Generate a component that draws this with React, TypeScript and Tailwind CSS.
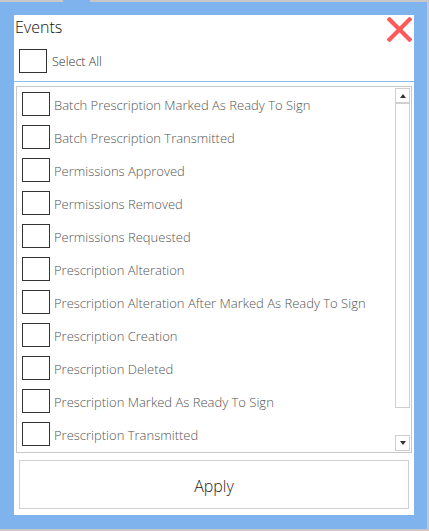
import React from "react";

const items = [
  "Batch Prescription Marked As Ready To Sign",
  "Batch Prescription Transmitted",
  "Permissions Approved",
  "Permissions Removed",
  "Permissions Requested",
  "Prescription Alteration",
  "Prescription Alteration After Marked As Ready To Sign",
  "Prescription Creation",
  "Prescription Deleted",
  "Prescription Marked As Ready To Sign",
  "Prescription Transmitted",
];

function Box() {
  return <div className="w-[28px] h-[24px] border border-[#333] bg-white shrink-0" />;
}

export default function App() {
  return (
    <div
      className="w-[429px] h-[531px] bg-[#c8c8c8] flex flex-col"
      style={{ fontFamily: '"Open Sans", "Liberation Sans", sans-serif' }}
    >
      <div className="h-[2px] flex shrink-0">
        <div className="w-[63px]" />
        <div className="w-[27px] bg-[#7fb3ed]" />
      </div>
      <div className="flex-1 bg-[#7fb3ed] mr-[2px] mb-[2px] pt-[13px] pl-[14px]">
        <div className="w-[400px] h-[500px] bg-white flex flex-col">
          <div className="flex justify-between items-start">
            <div className="mt-[1px] ml-[1px] text-[16px] leading-[22px] font-light text-[#111]">Events</div>
            <svg width="25" height="25" viewBox="0 0 25 25" className="mt-[2px] mr-[2px]">
              <path d="M2.5 2.5 L22.5 22.5 M22.5 2.5 L2.5 22.5" stroke="#ff5a5a" strokeWidth="4.2" strokeLinecap="square" />
            </svg>
          </div>
          <div className="flex items-center mt-[7px] ml-[5px] gap-[5px]">
            <Box />
            <span className="text-[12.5px] font-light text-[#333] pt-[3px]">Select All</span>
          </div>
          <div className="h-[1px] bg-[#8cbcee] mt-[8px]" />
          <div className="mt-[4px] mx-[2px] h-[367px] border border-[#c8c8c8] flex overflow-hidden">
            <div className="flex-1 flex flex-col gap-[9px] pt-[5px] pl-[5px]">
              {items.map((t) => (
                <div key={t} className="flex items-center gap-[4px]">
                  <Box />
                  <span className="text-[13px] leading-[18px] font-light text-[#555] whitespace-nowrap pt-[2px]">{t}</span>
                </div>
              ))}
            </div>
            <div className="w-[15px] mr-[1px] my-[1px] flex flex-col">
              <div className="h-[15px] border border-[#cfcfcf] bg-white flex items-center justify-center">
                <div className="w-0 h-0 border-l-[3.5px] border-r-[3.5px] border-b-[4px] border-l-transparent border-r-transparent border-b-[#333]" />
              </div>
              <div className="h-[305px] border border-[#cfcfcf] bg-white" />
              <div className="flex-1" />
              <div className="h-[16px] border border-[#cfcfcf] bg-white flex items-center justify-center">
                <div className="w-0 h-0 border-l-[3.5px] border-r-[3.5px] border-t-[4px] border-l-transparent border-r-transparent border-t-[#333]" />
              </div>
            </div>
          </div>
          <div className="mt-[7px] ml-[5px] w-[390px] h-[49px] border border-[#d0d0d0] flex items-center justify-center text-[16px] font-light text-[#222] pt-[2px]">
            Apply
          </div>
        </div>
      </div>
    </div>
  );
}
